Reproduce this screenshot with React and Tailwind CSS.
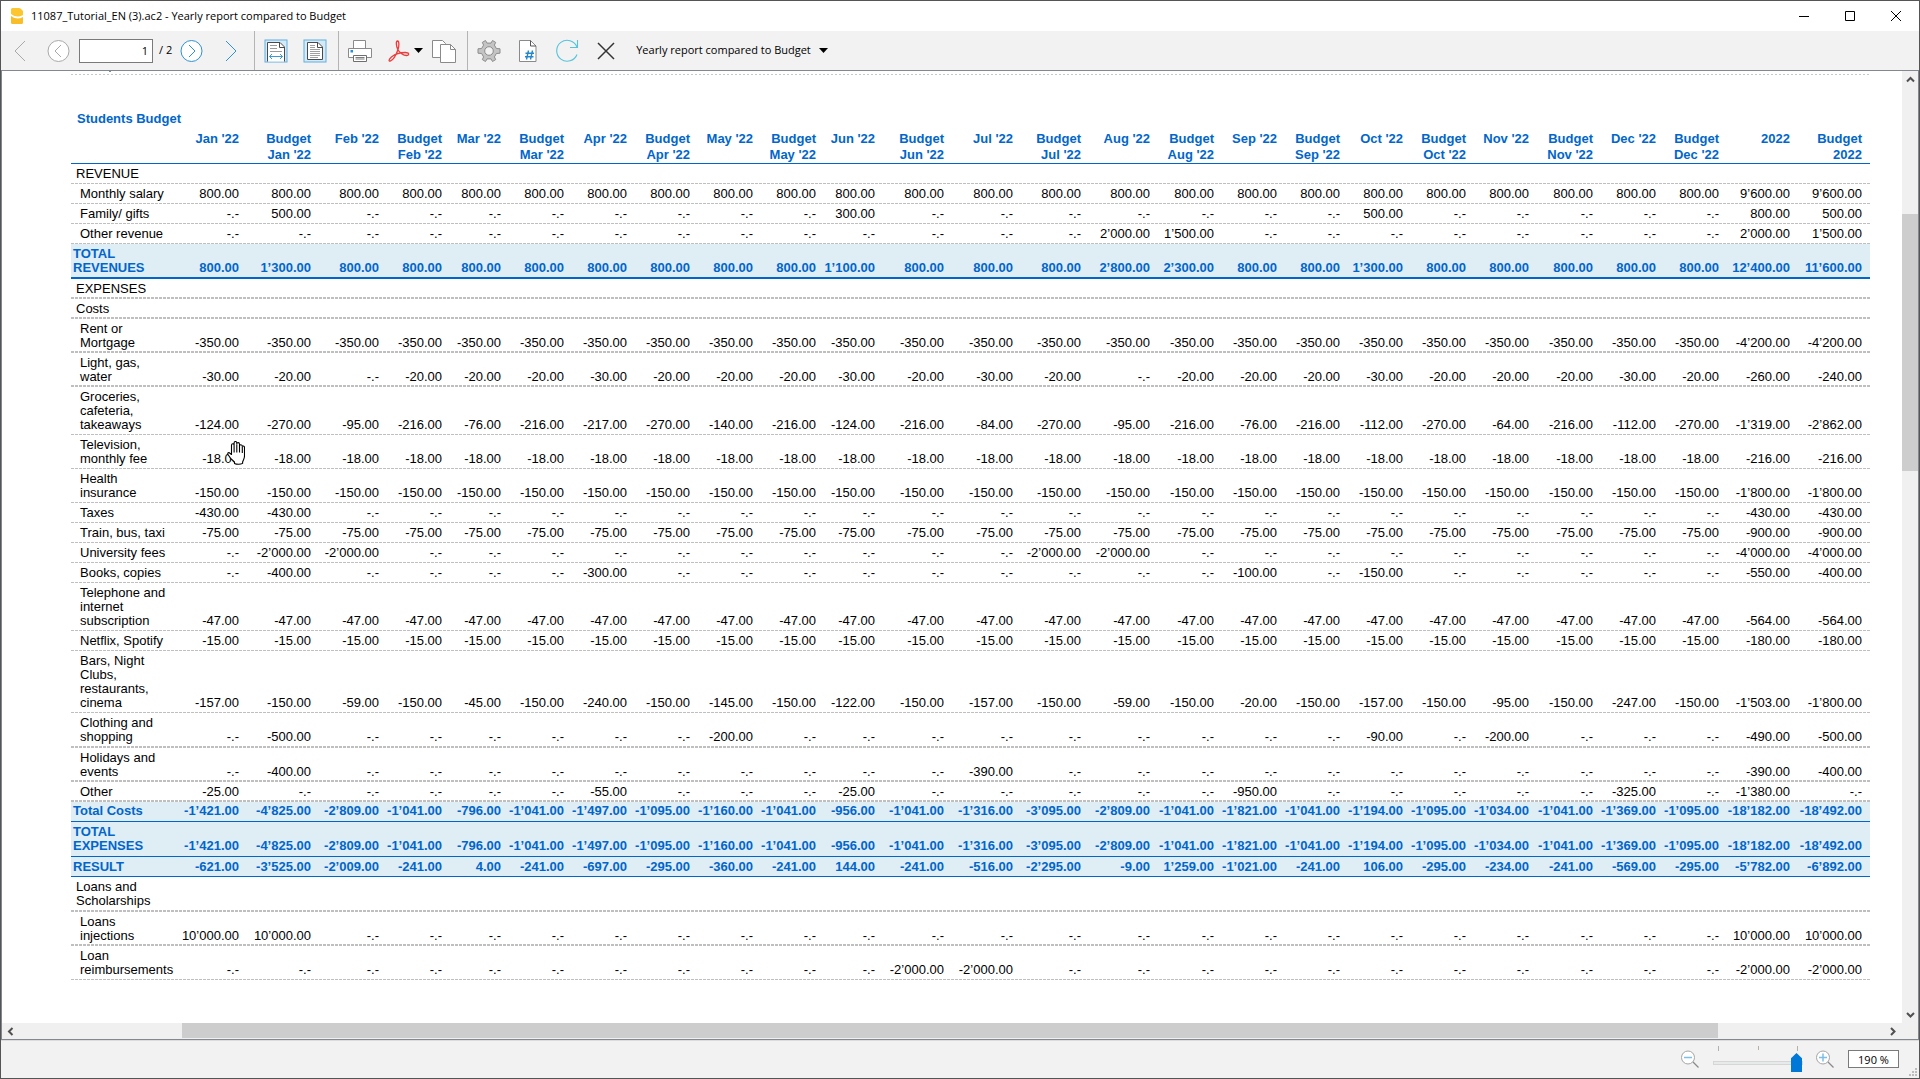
import React from "react";

const MONTHS = ["Jan", "Feb", "Mar", "Apr", "May", "Jun", "Jul", "Aug", "Sep", "Oct", "Nov", "Dec"];

const HEADERS = [
  ...MONTHS.flatMap((m) => [`${m} '22`, `Budget\n${m} '22`]),
  "2022",
  "Budget\n2022",
];

const WIDTHS = [
  105, 71, 72, 68, 63, 59, 63, 63, 63, 63, 63, 59, 69, 69, 68, 69, 64, 63, 63, 63, 63, 63, 64, 63, 63, 71, 72,
];

const fill = (value, ...totals) => [...Array(24).fill(value), ...totals];
const at = (cells, ...totals) => {
  const row = Array(24).fill(0);
  Object.entries(cells).forEach(([col, value]) => {
    row[col - 1] = value;
  });
  return [...row, ...totals];
};

const COSTS = [
  -1421, -4825, -2809, -1041, -796, -1041, -1497, -1095, -1160, -1041, -956, -1041, -1316, -3095, -2809, -1041,
  -1821, -1041, -1194, -1095, -1034, -1041, -1369, -1095, -18182, -18492,
];

const ROWS = [
  { kind: "section", label: "REVENUE" },
  { kind: "item", label: "Monthly salary", values: fill(800, 9600, 9600) },
  { kind: "item", label: "Family/ gifts", values: at({ 2: 500, 11: 300, 19: 500 }, 800, 500) },
  { kind: "item", label: "Other revenue", values: at({ 15: 2000, 16: 1500 }, 2000, 1500) },
  {
    kind: "total",
    line: "thickBlue",
    space: "roomy",
    label: "TOTAL\nREVENUES",
    values: [
      800, 1300, 800, 800, 800, 800, 800, 800, 800, 800, 1100, 800, 800, 800, 2800, 2300, 800, 800, 1300, 800, 800,
      800, 800, 800, 12400, 11600,
    ],
  },
  { kind: "section", line: "thick", label: "EXPENSES" },
  { kind: "section", line: "thick", label: "Costs" },
  { kind: "item", line: "thick", label: "Rent or\nMortgage", values: fill(-350, -4200, -4200) },
  {
    kind: "item",
    line: "thick",
    label: "Light, gas,\nwater",
    values: [
      -30, -20, 0, -20, -20, -20, -30, -20, -20, -20, -30, -20, -30, -20, 0, -20, -20, -20, -30, -20, -20, -20, -30,
      -20, -260, -240,
    ],
  },
  {
    kind: "item",
    label: "Groceries,\ncafeteria,\ntakeaways",
    values: [
      -124, -270, -95, -216, -76, -216, -217, -270, -140, -216, -124, -216, -84, -270, -95, -216, -76, -216, -112,
      -270, -64, -216, -112, -270, -1319, -2862,
    ],
  },
  { kind: "item", label: "Television,\nmonthly fee", values: fill(-18, -216, -216), hand: true },
  { kind: "item", label: "Health\ninsurance", values: fill(-150, -1800, -1800) },
  { kind: "item", label: "Taxes", values: at({ 1: -430, 2: -430 }, -430, -430) },
  { kind: "item", label: "Train, bus, taxi", values: fill(-75, -900, -900) },
  { kind: "item", label: "University fees", values: at({ 2: -2000, 3: -2000, 14: -2000, 15: -2000 }, -4000, -4000) },
  { kind: "item", label: "Books, copies", values: at({ 2: -400, 7: -300, 17: -100, 19: -150 }, -550, -400) },
  { kind: "item", label: "Telephone and\ninternet\nsubscription", values: fill(-47, -564, -564) },
  { kind: "item", label: "Netflix, Spotify", values: fill(-15, -180, -180) },
  {
    kind: "item",
    label: "Bars, Night\nClubs,\nrestaurants,\ncinema",
    values: [
      -157, -150, -59, -150, -45, -150, -240, -150, -145, -150, -122, -150, -157, -150, -59, -150, -20, -150, -157,
      -150, -95, -150, -247, -150, -1503, -1800,
    ],
  },
  {
    kind: "item",
    line: "thick",
    space: "roomy",
    label: "Clothing and\nshopping",
    values: at({ 2: -500, 9: -200, 19: -90, 21: -200 }, -490, -500),
  },
  { kind: "item", line: "thick", label: "Holidays and\nevents", values: at({ 2: -400, 13: -390 }, -390, -400) },
  { kind: "item", line: "thick", label: "Other", values: at({ 1: -25, 7: -55, 11: -25, 17: -950, 23: -325 }, -1380, 0) },
  { kind: "total", line: "blue", space: "raised", label: "Total Costs", values: COSTS },
  { kind: "total", line: "blue", space: "roomy", label: "TOTAL\nEXPENSES", values: COSTS },
  {
    kind: "total",
    line: "blue",
    label: "RESULT",
    values: [
      -621, -3525, -2009, -241, 4, -241, -697, -295, -360, -241, 144, -241, -516, -2295, -9, 1259, -1021, -241, 106,
      -295, -234, -241, -569, -295, -5782, -6892,
    ],
  },
  { kind: "section", line: "thick", space: "roomy", label: "Loans and\nScholarships" },
  { kind: "item", line: "thick", label: "Loans\ninjections", values: at({ 1: 10000, 2: 10000 }, 10000, 10000) },
  { kind: "item", label: "Loan\nreimbursements", values: at({ 12: -2000, 13: -2000 }, -2000, -2000) },
];

const LINES = {
  thin: "bg-[repeating-linear-gradient(90deg,#bfbfbf_0_3px,transparent_3px_4px)] bg-[length:100%_1px] bg-bottom bg-no-repeat",
  thick: "bg-[repeating-linear-gradient(90deg,#bfbfbf_0_3px,transparent_3px_4px)] bg-[length:100%_2px] bg-bottom bg-no-repeat",
  blue: "bg-[linear-gradient(#0066cc,#0066cc)] bg-[length:100%_1px] bg-bottom bg-no-repeat",
  thickBlue: "bg-[linear-gradient(#0066cc,#0066cc)] bg-[length:100%_2px] bg-bottom bg-no-repeat",
};

const SPACES = {
  normal: "py-[3px]",
  roomy: "pt-[3px] pb-1",
  raised: "pt-[2px] pb-1",
};

const LABELS = {
  section: "pl-[5px] font-normal",
  item: "pl-[9px] font-normal",
  total: "pl-[2px] font-bold",
};

function format(n) {
  if (n === 0) return "-.-";
  const abs = String(Math.abs(n)).replace(/\B(?=(\d{3})+$)/g, "\u2019");
  return `${n < 0 ? "-" : ""}${abs}.00`;
}

function HandCursor() {
  return (
    <svg className="absolute right-[2px] bottom-1 h-6 w-[18px]" viewBox="0 0 18 24" fill="#fff" stroke="#000" strokeWidth="1.1" strokeLinejoin="round">
      <path d="M4.500 13.500V4.200c0-2 2.600-2 2.600 0V2c0-2 2.700-2 2.700 0v1c0-1.900 2.700-1.900 2.700.2V5c0-1.900 2.800-1.700 2.800.4 1.200-.8 2.200 0 2.200 1.200V15c0 3-1.500 4-1.900 6.200v1.200c-2 1.200-6 1.200-8.100 0V21C5 19 3 17.500 1 13.500c-.8-1.800.9-2.500 1.900-1.300z" />
      <path d="M7.100 4.500v7M9.800 3.500v8M12.500 4.500v7M15.300 6v6" fill="none" />
    </svg>
  );
}

function Report() {
  return (
    <table className="w-full table-fixed border-separate border-spacing-0 text-[13px] leading-[14px] text-black">
      <caption className="pb-1 pl-[6px] text-left leading-4 font-bold text-[#0066cc]">Students Budget</caption>
      <colgroup>
        {WIDTHS.map((w, i) => (
          <col key={i} style={{ width: w }} />
        ))}
      </colgroup>
      <thead>
        <tr className={LINES.blue}>
          <td />
          {HEADERS.map((h) => (
            <th key={h} scope="col" className="pr-2 pb-px text-right align-top leading-4 font-bold whitespace-pre text-[#0066cc]">
              {h}
            </th>
          ))}
        </tr>
      </thead>
      <tbody>
        {ROWS.map((row) => {
          const space = SPACES[row.space || "normal"];
          return (
            <tr
              key={row.label}
              className={`${LINES[row.line || "thin"]} ${row.kind === "total" ? "bg-[#dfedf5] font-bold text-[#0066cc]" : ""}`}
            >
              <th scope="row" className={`${space} ${LABELS[row.kind]} text-left align-top whitespace-pre`}>
                {row.label}
              </th>
              {HEADERS.map((h, i) => (
                <td key={h} className={`${space} pr-2 text-right align-bottom whitespace-nowrap ${row.hand && i === 0 ? "relative" : ""}`}>
                  {row.values && format(row.values[i])}
                  {row.hand && i === 0 && <HandCursor />}
                </td>
              ))}
            </tr>
          );
        })}
      </tbody>
    </table>
  );
}

function Icon({ children, label }) {
  return (
    <button aria-label={label} className="size-6 shrink-0">
      <svg viewBox="0 0 24 24" className="size-6" fill="none">
        {children}
      </svg>
    </button>
  );
}

const Separator = () => <span className="w-px self-stretch bg-[#b4b4b4]" />;
const Group = ({ children }) => <div className="flex items-center gap-[15px] pr-[11px] pl-[9px]">{children}</div>;
const Triangle = () => (
  <svg viewBox="0 0 9 5" className="h-[5px] w-[9px]">
    <path d="M0 0h9L4.500 5z" fill="#000" />
  </svg>
);

function Toolbar() {
  return (
    <div className="flex h-[39px] shrink-0 items-center bg-[#f2f2f2]">
      <div className="flex items-center pr-[11px] pl-[7px]">
        <Icon label="First page">
          <path d="M17 2 7 12l10 10" stroke="#a9a9a9" />
        </Icon>
        <span className="w-[15px]" />
        <Icon label="Previous page">
          <circle cx="11.500" cy="12" r="10.500" fill="#fff" stroke="#a9a9a9" />
          <path d="m14 6-6 6 6 6" stroke="#a9a9a9" />
        </Icon>
        <input
          aria-label="Page"
          defaultValue="1"
          className="ml-2 h-6 w-[74px] border border-[#7a7a7a] bg-white pr-1 text-right text-[11px] text-black outline-none"
        />
        <span className="mr-2 ml-[6px] text-[11px]">/ 2</span>
        <Icon label="Next page">
          <circle cx="11.500" cy="12" r="10.500" fill="#fff" stroke="#2e93d1" />
          <path d="m9 6 6 6-6 6" stroke="#2e93d1" />
        </Icon>
        <span className="w-[15px]" />
        <Icon label="Last page">
          <path d="m7 2 10 10L7 22" stroke="#2e93d1" />
        </Icon>
      </div>
      <Separator />
      <Group>
        <Icon label="Fit width">
          <rect x="1" y="1" width="22" height="22" fill="#d5eaf8" stroke="#5fb0e0" />
          <path d="M3.500 22.500v-19H16l4.500 4.500v14.500" fill="#fff" stroke="#4a4a4a" />
          <path d="M15.500 3.500v5h5" stroke="#4a4a4a" />
          <path d="M6 6.500h7M6 9.500h7M6 12.500h12" stroke="#9a9a9a" />
          <path d="M5.500 17.500h13M8 15l-2.500 2.500L8 20M16 15l2.500 2.500L16 20" stroke="#3b9ad6" />
        </Icon>
        <Icon label="Fit page">
          <rect x="1" y="1" width="22" height="22" fill="#d5eaf8" stroke="#5fb0e0" />
          <path d="M4.500 3.500H15l4.500 4.500v12.500h-15z" fill="#fff" stroke="#4a4a4a" />
          <path d="M14.500 3.500v5h5" stroke="#4a4a4a" />
          <path d="M7 6.500h5M7 8.500h5M7 10.500h10M7 12.500h10M7 14.500h10M7 16.500h10M7 18.500h8" stroke="#a0a0a0" />
        </Icon>
      </Group>
      <Separator />
      <div className="flex items-center pr-[11px] pl-[9px]">
        <Icon label="Print">
          <path d="M5.500 9V1.500h12V9" fill="#fff" stroke="#8a8a8a" />
          <path d="M.5 9.500h23v9H.5z" fill="#fff" stroke="#8a8a8a" />
          <rect x="2.500" y="11" width="2.500" height="2.500" fill="#1e90e0" />
          <path d="M5.500 16.500h13v6h-13z" fill="#fff" stroke="#6e6e6e" />
          <path d="M7.500 18.500h9M7.500 20h9" stroke="#7e7e7e" />
        </Icon>
        <span className="w-[15px]" />
        <Icon label="Export to PDF">
          <path
            d="M10.500 2c-1.800.2-1.300 4.800.2 8.200 1.800 3.700 5.800 6.300 8.800 6.300 3.200-.2 2.800-3-1.200-3-5 0-10.300 1.700-13.600 4.300-3.400 2.800-3 4.800-1.500 4.300 2.800-1 6.200-6.900 7.800-11.600C12.200 6.800 12.300 2 10.500 2z"
            stroke="#ee3b3b"
            strokeWidth="1.300"
          />
        </Icon>
        <button aria-label="Export options" className="ml-[3px] flex h-6 w-[9px] items-center">
          <Triangle />
        </button>
        <span className="w-[9px]" />
        <Icon label="Copy">
          <path d="M.5 1.500h10l3 3v14H.5z" fill="#fff" stroke="#8a8a8a" />
          <path d="M8.500 5.500h10l5 5v13h-15z" fill="#fff" stroke="#8a8a8a" />
          <path d="M18.500 5.500v5h5" stroke="#8a8a8a" />
        </Icon>
      </div>
      <Separator />
      <Group>
        <Icon label="Settings">
          <path
            d="m8.500 1.500 1.500 2.600h4l1.500-2.600 3.200 1.900-1.300 2.700 2 3.400 3.600.3v4.400l-3.600.3-2 3.400 1.300 2.700-3.200 1.900-1.500-2.600h-4l-1.500 2.600-3.200-1.900 1.300-2.700-2-3.400-3.600-.3V9.800l3.600-.3 2-3.400-1.300-2.700z"
            fill="#c4c4c4"
            stroke="#8c8c8c"
            strokeLinejoin="round"
          />
          <circle cx="12" cy="12" r="4.300" fill="#f2f2f2" stroke="#8c8c8c" />
        </Icon>
        <Icon label="Page numbers">
          <path d="M3.500 1.500h11l5.500 5.500v15.500H3.500z" fill="#fff" stroke="#8a8a8a" />
          <path d="M14.500 1.500V7H20" stroke="#555" />
          <path d="m12.500 11.500-2 9M16.500 11.500l-2 9M9.500 14.300h8.500M9 17.700h8.500" stroke="#2487cc" strokeWidth="1.400" />
        </Icon>
        <Icon label="Refresh">
          <path d="M22 8A10.500 10.500 0 1 0 22 15.500" stroke="#55c3dc" strokeWidth="1.100" />
          <path d="M22.500 1v7.500H15" stroke="#55c3dc" strokeWidth="1.100" />
        </Icon>
        <Icon label="Close preview">
          <path d="m4 4 16 16M20 4 4 20" stroke="#333" strokeWidth="1.500" />
        </Icon>
      </Group>
      <button className="ml-[7px] flex items-center gap-2 text-[11px] text-black">
        Yearly report compared to Budget
        <Triangle />
      </button>
    </div>
  );
}

const Arrow = ({ d }) => (
  <svg viewBox="0 0 9 9" className="size-[9px]" fill="none" stroke="#505050" strokeWidth="2">
    <path d={d} />
  </svg>
);

function Magnifier({ plus }) {
  return (
    <button aria-label={plus ? "Zoom in" : "Zoom out"}>
      <svg viewBox="0 0 18 18" className="size-[18px]" fill="none">
        <circle cx="7" cy="7.500" r="6.500" fill="#fff" stroke="#a5a5a5" />
        <path d="m12 12 5.500 5.500" stroke="#8a8a8a" strokeWidth="1.300" />
        <path d={plus ? "M3 7.500h8M7 3.500v8" : "M3 7.500h8"} stroke="#7cc0e8" strokeWidth="1.500" />
      </svg>
    </button>
  );
}

function StatusBar() {
  return (
    <div className="relative flex h-[38px] shrink-0 items-center justify-end border-t border-[#dcdcdc] bg-[#f2f2f2] pr-5 pb-px">
      <Magnifier />
      <div className="relative mr-[13px] ml-[14px] w-[90px] pt-2">
        <div className="absolute inset-x-[5px] top-0 flex justify-between">
          <span className="h-[5px] w-px bg-[#b5b1a8]" />
          <span className="h-1 w-px bg-[#b5b1a8]" />
          <span className="h-[5px] w-px bg-[#b5b1a8]" />
        </div>
        <input
          type="range"
          aria-label="Zoom"
          defaultValue="100"
          className="block h-[18px] w-full appearance-none bg-transparent [&::-webkit-slider-runnable-track]:h-1 [&::-webkit-slider-runnable-track]:border [&::-webkit-slider-runnable-track]:border-[#d6d6d6] [&::-webkit-slider-runnable-track]:bg-[#e7eaea] [&::-webkit-slider-thumb]:-mt-[9px] [&::-webkit-slider-thumb]:h-[19px] [&::-webkit-slider-thumb]:w-[11px] [&::-webkit-slider-thumb]:appearance-none [&::-webkit-slider-thumb]:bg-[#0078d7] [&::-webkit-slider-thumb]:[clip-path:polygon(50%_0,100%_28%,100%_100%,0_100%,0_28%)]"
        />
      </div>
      <Magnifier plus />
      <input
        aria-label="Zoom level"
        defaultValue="190 %"
        className="ml-[14px] h-[18px] w-[51px] border border-[#7a7a7a] bg-white text-center text-[11px] text-black outline-none"
      />
      <svg className="absolute right-[2px] bottom-[2px] size-2" viewBox="0 0 8 8" fill="#bdbdbd">
        <path d="M6 0h2v2H6zM6 3h2v2H6zM6 6h2v2H6zM3 3h2v2H3zM3 6h2v2H3zM0 6h2v2H0z" />
      </svg>
    </div>
  );
}

export default function App() {
  return (
    <div className="flex h-screen flex-col overflow-hidden border border-[#555] bg-white font-['Open_Sans',sans-serif] text-black">
      <header className="flex h-[30px] shrink-0 items-center pl-[10px]">
        <svg viewBox="0 0 12 16" className="h-4 w-3">
          <path d="M0 1.500Q0 0 1.500 0H8q1 0 1.800.8L12 3v4Q6 10.500 0 6z" fill="#fbc62f" />
          <path d="M0 8q6 4.500 12 1v5.500q0 1.500-1.500 1.500h-9Q0 16 0 14.500z" fill="#f9bd27" />
        </svg>
        <h1 className="ml-2 text-[11px]">11087_Tutorial_EN (3).ac2 - Yearly report compared to Budget</h1>
        <div className="ml-auto flex">
          {["M9 8.500h10", "M9.500 3.500h9v9h-9z", "m9 3 10 10M19 3 9 13"].map((d, i) => (
            <button key={d} aria-label={["Minimize", "Maximize", "Close"][i]} className="flex w-[46px] justify-center">
              <svg viewBox="0 0 28 16" className="h-4 w-7" fill="none" stroke="#000">
                <path d={d} />
              </svg>
            </button>
          ))}
        </div>
      </header>
      <Toolbar />
      <main className="flex min-h-0 flex-1 flex-col border border-[#828790]">
        <div className="flex min-h-0 flex-1">
          <div className="min-w-0 flex-1 overflow-hidden pr-8 pl-[69px] font-['Liberation_Sans',Arial,sans-serif]">
            <div className="ml-[38px] h-px w-[2px] bg-[#7a8ea6]" />
            <div className="mt-[2px] mb-9 h-px bg-[repeating-linear-gradient(90deg,#c8c8c8_0_2px,transparent_2px_4px)]" />
            <Report />
          </div>
          <div className="flex w-4 flex-col items-center bg-[#f0f0f0] pt-1 pb-1">
            <Arrow d="M1 6.500 4.500 3 8 6.500" />
            <div className="flex w-full flex-1 flex-col py-1">
              <div className="basis-[13.700%]" />
              <div className="basis-[28%] bg-[#cdcdcd]" />
            </div>
            <Arrow d="M1 3 4.500 6.500 8 3" />
          </div>
        </div>
        <div className="flex h-4 shrink-0 items-center bg-[#f0f0f0] pr-[21px] pl-1">
          <Arrow d="M6.500 1 3 4.500 6.500 8" />
          <div className="flex h-full flex-1 pb-px">
            <div className="basis-[8.900%]" />
            <div className="basis-[82%] bg-[#cdcdcd]" />
          </div>
          <Arrow d="M3 1 6.500 4.500 3 8" />
        </div>
      </main>
      <StatusBar />
    </div>
  );
}
